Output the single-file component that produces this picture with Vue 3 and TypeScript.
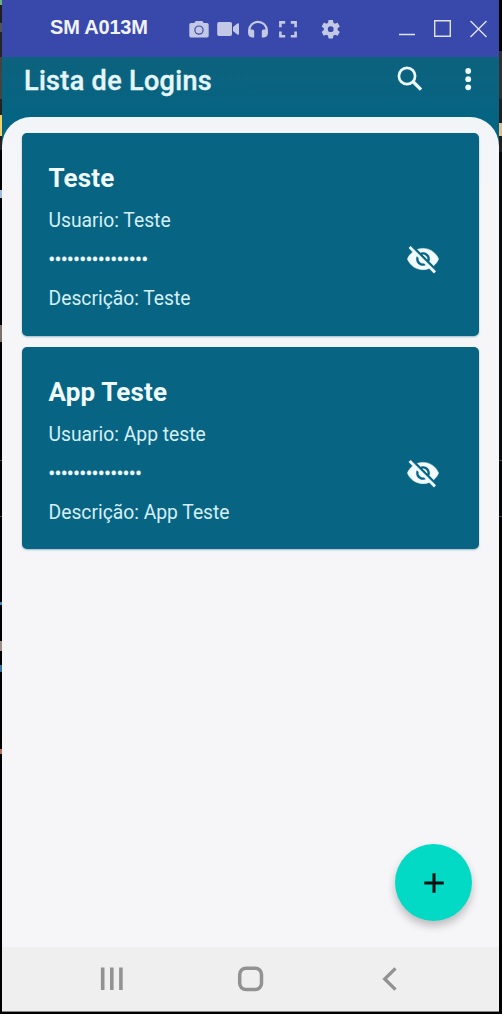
<script setup lang="ts">
interface Login {
  title: string
  user: string
  passwordLength: number
  description: string
}

const logins: Login[] = [
  { title: 'Teste', user: 'Teste', passwordLength: 16, description: 'Teste' },
  { title: 'App Teste', user: 'App teste', passwordLength: 15, description: 'App Teste' },
]
</script>

<template>
  <div class="desktop">
    <div class="window">
      <header class="titlebar">
        <span class="device">SM A013M</span>
        <svg class="tools" width="160" height="57" viewBox="185 0 160 57" fill="#c3c9e5">
          <path fill-rule="evenodd" d="M191 23h3.2l1.5-2h6.6l1.5 2h3.2q1.7 0 1.7 1.7v11.1q0 1.7-1.7 1.7h-16q-1.7 0-1.7-1.7V24.7q0-1.7 1.7-1.7zM199 25.4a4.7 4.7 0 1 0 0 9.4 4.7 4.7 0 0 0 0-9.4zm0 1.2a3.5 3.5 0 1 1 0 7 3.5 3.5 0 0 1 0-7z" />
          <path d="M219 22h11.2q1.8 0 1.8 1.8v10.4q0 1.8-1.8 1.8H219q-1.8 0-1.8-1.8V23.800q0-1.800 1.800-1.800zM233 27l4.300-3.500q1.700-.9 1.700.8v9.400q0 1.700-1.700.8L233 31z" />
          <path d="M249.300 33.500v-3.500a8.700 8.200 0 0 1 17.400 0v3.500" fill="none" stroke="#c3c9e5" stroke-width="2.200" />
          <path d="M248.200 29.500h4.200q1.800 0 1.800 1.800v6.200h-2q-4-.5-4-4zM267.800 29.500h-4.200q-1.800 0-1.800 1.800v6.200h2q4-.5 4-4z" />
          <path d="M280.400 27.200V22.400h4.800M290.800 22.400h4.800v4.800M295.600 31.500v4.800h-4.800M285.200 36.300h-4.800v-4.800" fill="none" stroke="#c3c9e5" stroke-width="2.600" />
          <g transform="translate(319.200 17.700) scale(.96)">
            <path d="M19.140 12.940c.04-.3.060-.610.060-.94s-.020-.640-.070-.940l2.030-1.580c.180-.140.230-.410.120-.610l-1.920-3.320c-.120-.220-.370-.290-.590-.220l-2.390.960c-.5-.380-1.030-.7-1.620-.940l-.360-2.540c-.040-.240-.240-.410-.480-.410h-3.840c-.240 0-.430.170-.470.410l-.360 2.540c-.590.240-1.130.570-1.620.940l-2.390-.960c-.220-.080-.470 0-.590.220L2.740 8.870c-.120.210-.080.470.120.610l2.030 1.580c-.050.300-.090.630-.090.940s.020.640.070.940l-2.030 1.580c-.180.140-.230.410-.120.610l1.920 3.320c.120.220.370.290.590.220l2.390-.960c.5.380 1.030.7 1.620.940l.360 2.540c.050.240.240.410.480.410h3.840c.240 0 .440-.170.470-.410l.360-2.540c.590-.240 1.130-.560 1.620-.940l2.390.960c.220.080.470 0 .590-.220l1.920-3.320c.120-.220.070-.470-.120-.610zM12 15a3 3 0 1 1 0-6 3 3 0 0 1 0 6z" />
          </g>
        </svg>
        <svg class="controls" width="100" height="57" viewBox="392 0 100 57" fill="none" stroke="#dfe2f3" stroke-width="1.400">
          <path d="M399 34.500h16M434.700 20.700h15.600v15.600h-15.600zM470.500 21l16 16M486.500 21l-16 16" />
        </svg>
      </header>

      <main class="screen">
        <div class="appbar">
          <h1>Lista de Logins</h1>
          <svg class="actions" width="90" height="60" viewBox="392 57 90 60">
            <circle cx="407" cy="76" r="8.100" fill="none" stroke="#edfaff" stroke-width="2.700" />
            <path d="M412.600 81.200l8.400 8.400" stroke="#edfaff" stroke-width="3.400" />
            <g fill="#edfaff">
              <circle cx="468.200" cy="71" r="2.900" />
              <circle cx="468.200" cy="79.200" r="2.900" />
              <circle cx="468.200" cy="87.300" r="2.900" />
            </g>
          </svg>
        </div>

        <section class="sheet">
          <article v-for="login in logins" :key="login.title" class="card">
            <div class="details">
              <h2>{{ login.title }}</h2>
              <p>Usuario: {{ login.user }}</p>
              <p class="password">{{ '•'.repeat(login.passwordLength) }}</p>
              <p>Descrição: {{ login.description }}</p>
            </div>
            <svg class="eye" width="34" height="34" viewBox="0 0 24 24" fill="#f2fbff" stroke="#f2fbff" stroke-width=".350">
              <path d="M12 7c2.760 0 5 2.240 5 5 0 .650-.130 1.260-.360 1.830l2.920 2.920c1.510-1.260 2.700-2.890 3.430-4.750-1.730-4.390-6-7.500-11-7.500-1.400 0-2.740.250-3.980.700l2.160 2.160C10.740 7.130 11.350 7 12 7zM2 4.270l2.280 2.280.460.460C3.080 8.300 1.780 10.020 1 12c1.730 4.390 6 7.500 11 7.500 1.550 0 3.030-.300 4.380-.840l.420.420L19.730 22 21 20.730 3.270 3 2 4.270zM7.530 9.800l1.550 1.550c-.050.210-.080.430-.080.650 0 1.660 1.340 3 3 3 .220 0 .440-.030.650-.080l1.550 1.550c-.670.330-1.410.530-2.200.530-2.760 0-5-2.240-5-5 0-.790.200-1.530.530-2.200zm4.310-.780l3.150 3.150.020-.160c0-1.660-1.340-3-3-3l-.170.010z" />
            </svg>
          </article>
          <button class="fab" aria-label="Adicionar">
            <svg width="20" height="20" viewBox="0 0 20 20" stroke="#04100f" stroke-width="3">
              <path d="M10 .300v19.400M.300 10h19.400" />
            </svg>
          </button>
        </section>
      </main>

      <nav class="navbar">
        <svg width="497" height="64" viewBox="2 947 497 64" fill="none" stroke="#929292">
          <path d="M102.700 967.500v22.500M111.800 967.500v22.500M120.900 967.500v22.500" stroke-width="3.600" />
          <rect x="239.700" y="968.200" width="21.800" height="21.400" rx="6.300" stroke-width="3.500" />
          <path d="M395.500 968.300L384.700 979l10.800 10.700" stroke-width="3.300" />
        </svg>
      </nav>
    </div>
  </div>
</template>

<style>
body {
  margin: 0;
}
</style>

<style scoped>
.desktop {
  box-sizing: border-box;
  width: 502px;
  height: 1014px;
  padding: 0 3px 2px 2px;
  overflow: hidden;
  background:
    linear-gradient(#000 0 51px, #303030 51px 99px, #202020 99px 123px, #e0c08c 123px 136px, #202020 136px 152px, #0a0b0e 152px 460px, #45474c 460px 461px, #040507 461px 516px, #45474c 516px 517px, #000 517px) right 0 top 0 / 3px 100% no-repeat,
    linear-gradient(#6fae80 0 5px, #202020 5px 23px, #555 23px 32px, #252525 32px 57px, #444 57px 99px, #222 99px 115px, #efd26a 115px 136px, #25201f 136px 150px, #000 150px 190px, #9dbce0 190px 198px, #000 198px 325px, #7b7168 325px 342px, #000 342px 460px, #57503a 460px 461px, #000 461px 516px, #57503a 516px 517px, #000 517px 602px, #4386bc 602px 605px, #000 605px 641px, #a08c86 641px 651px, #000 651px 665px, #346f9b 665px 672px, #000 672px 749px, #b0705a 749px 754px, #000 754px) left 0 top 0 / 2px 100% no-repeat,
    #000;
}
.window {
  display: flex;
  flex-direction: column;
  box-sizing: border-box;
  height: 1012px;
  border-bottom: 1px solid #858585;
  font-family: Roboto, "Liberation Sans", sans-serif;
}
.titlebar {
  display: flex;
  flex: none;
  height: 57px;
  background: #3949ab;
}
.device {
  width: 135px;
  padding-left: 48px;
  font: bold 20px/54px "Liberation Sans", Arial, sans-serif;
  letter-spacing: -0.200px;
  color: #f1f3fc;
}
.controls {
  margin-left: 47px;
}
.screen {
  display: flex;
  flex: 1;
  flex-direction: column;
  background: linear-gradient(#0d627d, #056483 60px);
}
.appbar {
  display: flex;
  justify-content: space-between;
  height: 60px;
}
h1 {
  margin: 0 0 0 22px;
  font-size: 27px;
  font-weight: 500;
  line-height: 48px;
  letter-spacing: 0.330px;
  color: #e4f6fb;
  -webkit-text-stroke: 0.400px #e4f6fb;
}
.actions {
  margin-right: 17px;
}
.sheet {
  position: relative;
  display: flex;
  flex: 1;
  flex-direction: column;
  gap: 11px;
  padding: 16px 20px 0;
  border-radius: 29px 29px 0 0;
  background: linear-gradient(#f2f5f8, #f6f6f9 80px);
}
.card {
  display: flex;
  justify-content: space-between;
  box-sizing: border-box;
  height: 202.500px;
  padding: 27px 39px 0 26.500px;
  border-radius: 5px;
  background: #076483;
  box-shadow: 0 1px 2px #07648366;
}
h2 {
  margin: 0;
  font-size: 26px;
  font-weight: 700;
  line-height: 36px;
  letter-spacing: 0.150px;
  color: #f0fbff;
}
p {
  margin: 0;
  padding-top: 10px;
  font-size: 19.300px;
  line-height: 29px;
  color: #d5eff8;
}
.password {
  letter-spacing: -0.310px;
  color: #f0fbff;
  -webkit-text-stroke: 0.400px #f0fbff;
}
.eye {
  margin-top: 82px;
}
.fab {
  position: absolute;
  right: 27px;
  bottom: 26px;
  display: flex;
  align-items: center;
  justify-content: center;
  width: 77px;
  height: 77px;
  padding: 0;
  border: 0;
  border-radius: 50%;
  background: #03dac5;
  box-shadow: 0 5px 9px #0000003d;
}
.navbar {
  height: 64px;
  background: #efefef;
}
.navbar svg {
  display: block;
}
</style>
